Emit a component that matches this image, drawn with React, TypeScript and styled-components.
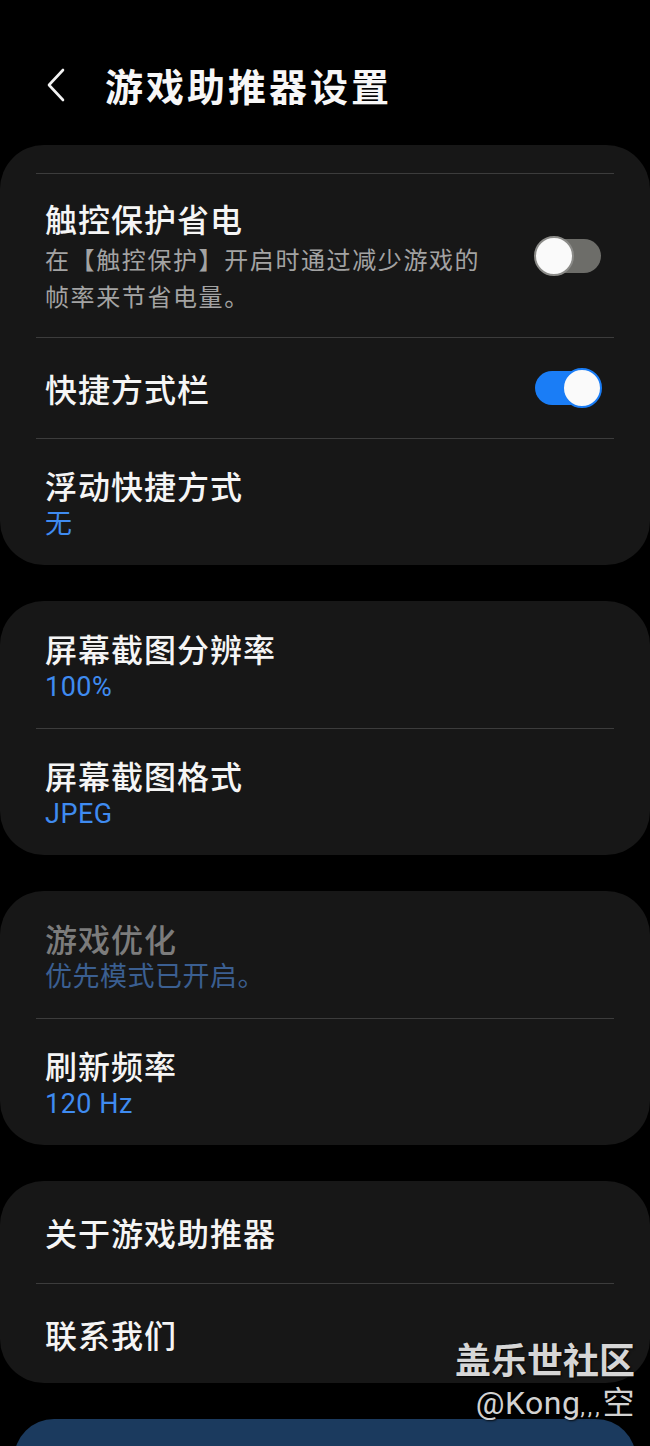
import styled, { createGlobalStyle } from "styled-components";

const GlobalStyle = createGlobalStyle`
  html, body {
    margin: 0;
    padding: 0;
    background: #000;
  }
  body {
    font-family: "Roboto", "Noto Sans CJK SC", sans-serif;
    -webkit-font-smoothing: antialiased;
  }
`;

const Screen = styled.div`
  position: relative;
  width: 650px;
  height: 1446px;
  overflow: hidden;
  background: #000;
`;

const Header = styled.div`
  display: flex;
  align-items: center;
  height: 50px;
  margin: 60px 0 35px;
  padding-left: 44px;
`;

const BackButton = styled.button`
  width: 24px;
  height: 36px;
  padding: 0;
  border: none;
  background: none;
  display: flex;
  align-items: center;
  justify-content: center;
  margin-right: 37px;
`;

const Title = styled.h1`
  margin: 0;
  font-family: "Noto Sans CJK SC", sans-serif;
  font-size: 38px;
  font-weight: 600;
  letter-spacing: 3px;
  color: #f7f7f7;
  line-height: 50px;
`;

const Card = styled.div<{ $top?: number }>`
  background: #171717;
  border-radius: 44px;
  padding-top: ${(p) => p.$top ?? 0}px;
  margin-bottom: 36px;
  overflow: hidden;
`;

const Divider = styled.div`
  height: 1px;
  margin: 0 36px;
  background: #3c3c3c;
`;

const Row = styled.div<{ $height?: number; $pt?: number; $pb?: number }>`
  display: flex;
  align-items: center;
  justify-content: space-between;
  box-sizing: border-box;
  padding: ${(p) => p.$pt ?? 0}px 49px ${(p) => p.$pb ?? 0}px 45px;
  ${(p) => (p.$height ? `height: ${p.$height}px;` : "")}
`;

const TextBlock = styled.div`
  display: flex;
  flex-direction: column;
  flex: 1;
`;

const RowTitle = styled.div<{ $disabled?: boolean }>`
  font-family: "Noto Sans CJK SC", sans-serif;
  font-size: 32px;
  font-weight: 500;
  letter-spacing: 1px;
  line-height: 40px;
  color: ${(p) => (p.$disabled ? "#7c7c7c" : "#f5f5f5")};
`;

const RowSub = styled.div`
  margin-top: 2px;
  font-family: "Noto Sans CJK SC", sans-serif;
  font-size: 24px;
  letter-spacing: 1.6px;
  line-height: 37px;
  color: #a3a3a3;
  max-width: 450px;
`;

const RowValue = styled.div<{ $dim?: boolean }>`
  margin-top: 3px;
  font-family: "Roboto", "Noto Sans CJK SC", sans-serif;
  font-size: 27px;
  letter-spacing: 0.5px;
  line-height: 32px;
  color: ${(p) => (p.$dim ? "#3b5f91" : "#3f8bf0")};
`;

const Track = styled.div<{ $on: boolean }>`
  position: relative;
  width: 66px;
  height: 34px;
  border-radius: 17px;
  background: ${(p) => (p.$on ? "#1a7df6" : "#6d6d69")};
  flex-shrink: 0;
`;

const Thumb = styled.div<{ $on: boolean }>`
  position: absolute;
  top: -3px;
  ${(p) => (p.$on ? "right: -1px;" : "left: -1px;")}
  width: 36px;
  height: 36px;
  border-radius: 50%;
  background: #fafafa;
  border: 2px solid ${(p) => (p.$on ? "#1a7df6" : "#8b8b88")};
`;

const BottomBar = styled.div`
  height: 80px;
  margin: 1px 14px 0;
  border-radius: 40px 40px 0 0;
  background: #1b3a5e;
`;

const Watermark = styled.div`
  position: absolute;
  right: 15px;
  top: 1333px;
  display: flex;
  flex-direction: column;
  align-items: flex-end;
  text-shadow: 1px 1px 2px rgba(0, 0, 0, 0.8);
`;

const MarkTitle = styled.div`
  font-family: "Noto Sans CJK SC", sans-serif;
  font-size: 36px;
  font-weight: 700;
  line-height: 50px;
  color: #d6d6d6;
`;

const MarkUser = styled.div`
  font-family: "Roboto", "Noto Sans CJK SC", sans-serif;
  font-size: 32px;
  letter-spacing: 0.5px;
  line-height: 40px;
  color: #d2d2d2;
`;

const Commas = styled.span`
  font-size: 22px;
  letter-spacing: 3px;
`;

const Toggle = ({ on }: { on: boolean }) => (
  <Track $on={on}>
    <Thumb $on={on} />
  </Track>
);

const App = () => {
  return (
    <Screen>
      <GlobalStyle />
      <Header>
        <BackButton>
          <svg width="20" height="34" viewBox="0 0 20 34" fill="none">
            <path d="M17 2 L3 17 L17 32" stroke="#f2f2f2" strokeWidth="2.6" strokeLinecap="round" strokeLinejoin="round" />
          </svg>
        </BackButton>
        <Title>游戏助推器设置</Title>
      </Header>

      <Card $top={28}>
        <Divider />
        <Row $pt={24} $pb={23}>
          <TextBlock>
            <RowTitle>触控保护省电</RowTitle>
            <RowSub>在【触控保护】开启时通过减少游戏的帧率来节省电量。</RowSub>
          </TextBlock>
          <Toggle on={false} />
        </Row>
        <Divider />
        <Row $height={100}>
          <RowTitle>快捷方式栏</RowTitle>
          <Toggle on={true} />
        </Row>
        <Divider />
        <Row $pt={26} $pb={25}>
          <TextBlock>
            <RowTitle>浮动快捷方式</RowTitle>
            <RowValue>无</RowValue>
          </TextBlock>
        </Row>
      </Card>

      <Card>
        <Row $pt={27} $pb={25}>
          <TextBlock>
            <RowTitle>屏幕截图分辨率</RowTitle>
            <RowValue>100%</RowValue>
          </TextBlock>
        </Row>
        <Divider />
        <Row $pt={26} $pb={25}>
          <TextBlock>
            <RowTitle>屏幕截图格式</RowTitle>
            <RowValue>JPEG</RowValue>
          </TextBlock>
        </Row>
      </Card>

      <Card>
        <Row $pt={27} $pb={25}>
          <TextBlock>
            <RowTitle $disabled>游戏优化</RowTitle>
            <RowValue $dim>优先模式已开启。</RowValue>
          </TextBlock>
        </Row>
        <Divider />
        <Row $pt={26} $pb={25}>
          <TextBlock>
            <RowTitle>刷新频率</RowTitle>
            <RowValue>120 Hz</RowValue>
          </TextBlock>
        </Row>
      </Card>

      <Card>
        <Row $height={102}>
          <RowTitle>关于游戏助推器</RowTitle>
        </Row>
        <Divider />
        <Row $height={99}>
          <RowTitle>联系我们</RowTitle>
        </Row>
      </Card>

      <BottomBar />

      <Watermark>
        <MarkTitle>盖乐世社区</MarkTitle>
        <MarkUser>
          @Kong<Commas>,,,</Commas>空
        </MarkUser>
      </Watermark>
    </Screen>
  );
};

export default App;
